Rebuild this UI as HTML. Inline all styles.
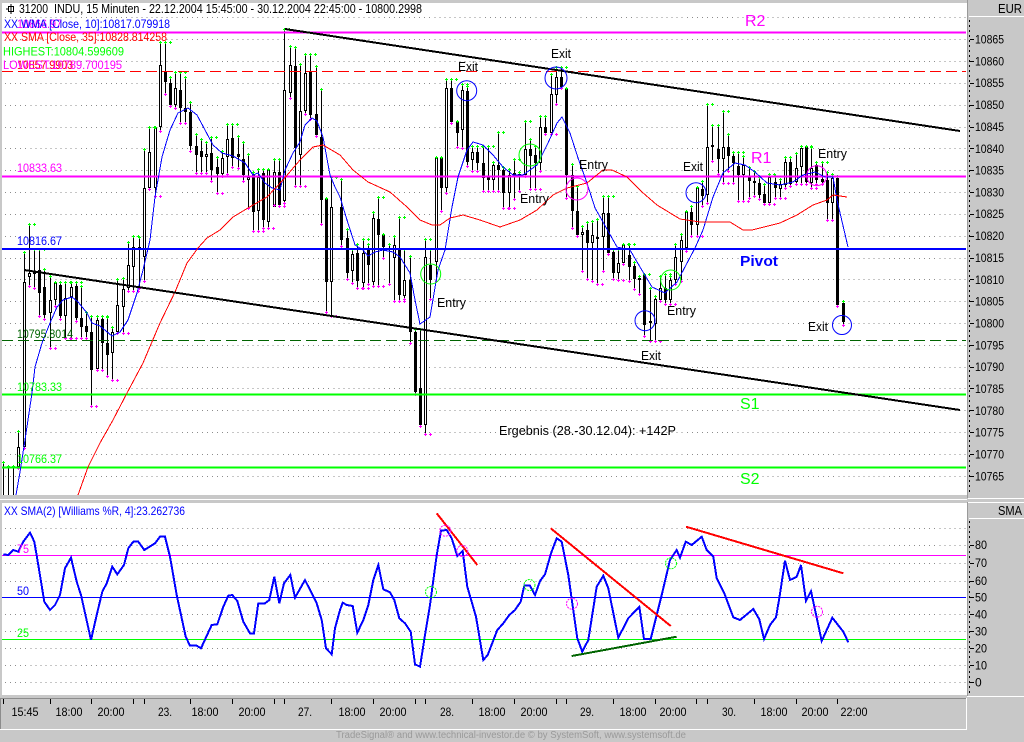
<!DOCTYPE html>
<html><head><meta charset="utf-8"><style>
html,body{margin:0;padding:0;background:#c8c8c8;width:1024px;height:742px;overflow:hidden}
svg{display:block}
text{font-family:"Liberation Sans",sans-serif;font-size:13px}
.a{font-size:12px}
</style></head><body>
<svg id="s" xmlns="http://www.w3.org/2000/svg" width="1024" height="742" viewBox="0 0 1024 742">
<rect width="1024" height="742" fill="#c8c8c8"/>
<rect x="2" y="3" width="965" height="492" fill="#fff"/>
<rect x="2" y="503" width="965" height="192" fill="#fff"/>
<rect x="0" y="499" width="967" height="1" fill="#fff"/>
<rect x="967" y="1" width="2" height="741" fill="#c8c8c8"/>
<rect x="967" y="0" width="1" height="498" fill="#9a9a9a"/>
<rect x="967" y="502" width="1" height="194" fill="#9a9a9a"/>
<rect x="969" y="16" width="55" height="1" fill="#fff"/>
<rect x="968" y="498" width="56" height="1" fill="#fff"/>
<rect x="968" y="502" width="56" height="1" fill="#fff"/>
<rect x="969" y="518" width="55" height="1" fill="#fff"/>
<rect x="967" y="696" width="57" height="1" fill="#fff"/>
<rect x="0" y="698" width="966" height="1" fill="#8c8c8c"/>
<rect x="0" y="729" width="967" height="1" fill="#fff"/>
<rect x="966" y="698" width="1" height="32" fill="#fff"/>
<rect x="0" y="698" width="1" height="31" fill="#8c8c8c"/>
<g id="grid"></g>
<g id="candles" shape-rendering="crispEdges"></g>
<g id="marks" shape-rendering="crispEdges"></g>
<g shape-rendering="crispEdges" fill="none">
<path d="M2 32.5H966M2 176.5H966" stroke="#f0f" stroke-width="2"/>
<path d="M2 249H966" stroke="#00f" stroke-width="2"/>
<path d="M2 394.5H966M2 467.5H966" stroke="#0f0" stroke-width="2"/>
<path d="M2 71.5H966" stroke="#f00" stroke-dasharray="11 5"/>
<path d="M2 340.5H966" stroke="#006400" stroke-dasharray="11 5"/>
<path id="wma" stroke="#00f"/>
<path id="sma" stroke="#f00"/>
<path d="M285 29L960 131M24 270L960 410" stroke="#000" stroke-width="2"/>
<path d="M2 555.5H966" stroke="#f0f"/>
<path d="M2 597.5H966" stroke="#00f"/>
<path d="M2 639.5H966" stroke="#0f0"/>
<path id="wil" stroke="#00f" stroke-width="2"/>
<path d="M436.7 513.3L477.3 565M550.7 528.3L670.7 626M686 526.7L843.3 573.3" stroke="#f00" stroke-width="2"/>
<path d="M571.7 656L676.7 636.7" stroke="#006400" stroke-width="2"/>
</g>
<g fill="none">
<circle cx="466.7" cy="90.7" r="10" stroke="#00f"/>
<circle cx="556" cy="78" r="11" stroke="#00f"/>
<circle cx="645" cy="320.7" r="10" stroke="#00f"/>
<circle cx="696" cy="192.7" r="10" stroke="#00f"/>
<circle cx="842" cy="325" r="9.5" stroke="#00f"/>
<circle cx="530" cy="155" r="11" stroke="#0f0"/>
<circle cx="430.7" cy="274" r="10" stroke="#0f0"/>
<circle cx="670.7" cy="280" r="10" stroke="#0f0"/>
<circle cx="577" cy="189" r="11" stroke="#f0f"/>
<circle cx="816.7" cy="175.7" r="10" stroke="#f0f"/>
<g stroke-dasharray="2 1">
<circle cx="431" cy="592" r="5.5" stroke="#0f0"/>
<circle cx="529.5" cy="585" r="5.5" stroke="#0f0"/>
<circle cx="671" cy="563.3" r="5.5" stroke="#0f0"/>
<circle cx="445.3" cy="530.7" r="5.5" stroke="#f0f"/>
<circle cx="462.3" cy="551" r="5.5" stroke="#f0f"/>
<circle cx="572" cy="603.7" r="5.5" stroke="#f0f"/>
<circle cx="817" cy="611.7" r="5.5" stroke="#f0f"/>
</g>
</g>
<g shape-rendering="crispEdges" fill="none" stroke="#000">
<rect x="8.5" y="6.5" width="5" height="5"/>
<path d="M11 4V14M6 9H8"/>
</g>
<g id="ticks" shape-rendering="crispEdges"></g>
<text x="19" y="13" textLength="29">31200</text>
<text x="54" y="13" textLength="368">INDU, 15 Minuten - 22.12.2004 15:45:00 - 30.12.2004 22:45:00 - 10800.2998</text>
<text class="a" x="17" y="28" fill="#f0f" textLength="45">10866.97</text>
<text class="a" x="4" y="28" fill="#00f" textLength="166">XX WMA [Close, 10]:10817.079918</text>
<text class="a" x="4" y="41" fill="#f00" textLength="163">XX SMA [Close, 35]:10828.814258</text>
<text class="a" x="3" y="55.5" fill="#0f0" textLength="121">HIGHEST:10804.599609</text>
<text class="a" x="17" y="69" fill="#f00" textLength="56">10857.9903</text>
<text class="a" x="3" y="69" fill="#f0f" textLength="119">LOWEST:10789.700195</text>
<text class="a" x="17" y="172" fill="#f0f" textLength="45">10833.63</text>
<text class="a" x="17" y="245" fill="#00f" textLength="45">10816.67</text>
<text class="a" x="17" y="338" fill="#006400" textLength="56">10795.8014</text>
<text class="a" x="17" y="391" fill="#0f0" textLength="45">10783.33</text>
<text class="a" x="17" y="463" fill="#0f0" textLength="45">10766.37</text>
<text x="458" y="71" textLength="20">Exit</text>
<text x="551" y="58" textLength="20">Exit</text>
<text x="579" y="169" textLength="29">Entry</text>
<text x="520" y="203" textLength="29">Entry</text>
<text x="683" y="171" textLength="20">Exit</text>
<text x="818" y="158" textLength="29">Entry</text>
<text x="437" y="307" textLength="29">Entry</text>
<text x="641" y="360" textLength="20">Exit</text>
<text x="667" y="315" textLength="29">Entry</text>
<text x="808" y="331" textLength="20">Exit</text>
<text x="499" y="435" textLength="177">Ergebnis (28.-30.12.04): +142P</text>
<text x="745" y="26" fill="#f0f" style="font-size:16px">R2</text>
<text x="751" y="163" fill="#f0f" style="font-size:16px">R1</text>
<text x="740" y="266" fill="#00f" style="font-size:15px;font-weight:bold" textLength="38">Pivot</text>
<text x="740" y="409" fill="#0f0" style="font-size:16px">S1</text>
<text x="740" y="484" fill="#0f0" style="font-size:16px">S2</text>
<text x="998" y="13" textLength="24">EUR</text>
<text x="998" y="515" textLength="24">SMA</text>
<text class="a" x="4" y="515" fill="#00f" textLength="181">XX SMA(2) [Williams %R, 4]:23.262736</text>
<text class="a" x="17" y="553" fill="#f0f" textLength="12">75</text>
<text class="a" x="17" y="595" fill="#00f" textLength="12">50</text>
<text class="a" x="17" y="637" fill="#0f0" textLength="12">25</text>
<g id="yl">
<text class="a" x="975" y="43.5" textLength="29">10865</text>
<text class="a" x="975" y="65.5" textLength="29">10860</text>
<text class="a" x="975" y="87" textLength="29">10855</text>
<text class="a" x="975" y="109" textLength="29">10850</text>
<text class="a" x="975" y="131" textLength="29">10845</text>
<text class="a" x="975" y="153" textLength="29">10840</text>
<text class="a" x="975" y="174.5" textLength="29">10835</text>
<text class="a" x="975" y="196.5" textLength="29">10830</text>
<text class="a" x="975" y="218" textLength="29">10825</text>
<text class="a" x="975" y="240" textLength="29">10820</text>
<text class="a" x="975" y="262" textLength="29">10815</text>
<text class="a" x="975" y="284" textLength="29">10810</text>
<text class="a" x="975" y="305.5" textLength="29">10805</text>
<text class="a" x="975" y="327.5" textLength="29">10800</text>
<text class="a" x="975" y="349.5" textLength="29">10795</text>
<text class="a" x="975" y="371" textLength="29">10790</text>
<text class="a" x="975" y="393" textLength="29">10785</text>
<text class="a" x="975" y="415" textLength="29">10780</text>
<text class="a" x="975" y="436.5" textLength="29">10775</text>
<text class="a" x="975" y="458.5" textLength="29">10770</text>
<text class="a" x="975" y="480.5" textLength="29">10765</text>
<text class="a" x="975" y="549" textLength="12">80</text>
<text class="a" x="975" y="567" textLength="12">70</text>
<text class="a" x="975" y="585" textLength="12">60</text>
<text class="a" x="975" y="601.5" textLength="12">50</text>
<text class="a" x="975" y="618.5" textLength="12">40</text>
<text class="a" x="975" y="635.5" textLength="12">30</text>
<text class="a" x="975" y="652.5" textLength="12">20</text>
<text class="a" x="975" y="669.5" textLength="12">10</text>
<text class="a" x="975" y="686.5">0</text>
</g>
<g id="xl">
<text class="a" x="11.5" y="716" textLength="27">15:45</text>
<text class="a" x="55.5" y="716" textLength="27">18:00</text>
<text class="a" x="97.5" y="716" textLength="27">20:00</text>
<text class="a" x="158" y="716" textLength="14">23.</text>
<text class="a" x="191.5" y="716" textLength="27">18:00</text>
<text class="a" x="238.5" y="716" textLength="27">20:00</text>
<text class="a" x="298" y="716" textLength="14">27.</text>
<text class="a" x="338.5" y="716" textLength="27">18:00</text>
<text class="a" x="379.5" y="716" textLength="27">20:00</text>
<text class="a" x="440" y="716" textLength="14">28.</text>
<text class="a" x="478.5" y="716" textLength="27">18:00</text>
<text class="a" x="520.5" y="716" textLength="27">20:00</text>
<text class="a" x="580" y="716" textLength="14">29.</text>
<text class="a" x="619.5" y="716" textLength="27">18:00</text>
<text class="a" x="659.5" y="716" textLength="27">20:00</text>
<text class="a" x="722" y="716" textLength="14">30.</text>
<text class="a" x="760.5" y="716" textLength="27">18:00</text>
<text class="a" x="801.5" y="716" textLength="27">20:00</text>
<text class="a" x="840.5" y="716" textLength="27">22:00</text>
</g>
<text x="336" y="738" fill="#9a9a9a" style="font-size:10px" textLength="350">TradeSignal® and www.technical-investor.de © by  SystemSoft, www.systemsoft.de</text>
</svg>
<script>
var NS="http://www.w3.org/2000/svg";
function E(p,n,a){var e=document.createElementNS(NS,n);for(var k in a)e.setAttribute(k,a[k]);p.appendChild(e);return e}
var $=function(i){return document.getElementById(i)};
var ts=document.querySelectorAll("text[textLength]");
for(var q=0;q<ts.length;q++)ts[q].setAttribute("lengthAdjust","spacingAndGlyphs");
// grid
var g=$("grid"),d="";
for(var i=-1;i<=20;i++){var y=Math.round(39.3+21.82*i)+.5;if(y>4&&y<495)d+="M5 "+y+"H966"}
[528,545,563,581,614,631,648,665,682].forEach(function(y){d+="M5 "+(y+.5)+"H966"});
E(g,"path",{d:d,stroke:"#8c8c8c","stroke-dasharray":"1 4.05",fill:"none","shape-rendering":"crispEdges"});
// candles x hi lo top bot fill (2 = no body)
var D=[[3,463,495,480,480,2],[8,467,495,480,480,2],[13,467,495,480,480,2],[18,432,467,447,467,0],[24,253,447,282,447,0],[29,225,285,273,277,0],[34,250,287,272,274,1],[39,250,315,270,293,1],[44,270,318,287,315,1],[50,277,347,300,313,0],[55,283,305,283,300,0],[60,283,318,285,316,1],[65,283,337,298,316,0],[71,283,337,287,297,0],[76,283,320,286,318,1],[81,287,337,318,327,1],[86,313,337,326,332,1],[91,317,405,332,370,1],[97,317,369,320,369,0],[102,317,369,319,343,1],[107,318,375,343,355,1],[112,328,379,332,353,0],[117,280,332,305,332,0],[123,279,332,289,307,0],[128,243,290,265,288,0],[133,237,290,247,267,0],[139,238,287,247,250,1],[144,150,280,188,257,0],[149,128,188,152,188,0],[155,128,195,128,188,0],[160,43,130,65,127,0],[165,43,93,71,82,1],[170,78,105,83,105,1],[175,73,107,88,105,0],[180,73,122,90,108,1],[185,78,122,108,112,1],[190,103,150,112,146,1],[196,135,172,146,155,1],[201,140,172,151,157,1],[206,143,172,154,157,0],[211,138,180,153,170,1],[217,158,192,167,174,1],[222,152,175,158,174,0],[227,125,173,139,157,0],[232,125,166,138,158,1],[238,137,167,154,157,1],[243,143,180,159,175,1],[248,155,207,177,180,0],[253,173,230,175,212,1],[258,170,230,177,211,0],[263,170,227,173,220,1],[268,170,227,170,222,0],[274,160,204,172,207,0],[279,160,205,172,205,1],[284,30,202,90,201,0],[290,47,97,65,93,0],[295,48,185,66,148,1],[300,65,185,111,155,0],[305,55,113,73,111,0],[310,55,118,72,115,1],[316,67,135,114,135,1],[321,90,223,137,200,1],[326,199,311,199,282,1],[331,178,315,207,282,0],[341.5,180,245,207,240,1],[347,230,278,238,273,1],[352,250,282,254,271,0],[357,245,287,253,281,1],[363,240,287,253,283,0],[368,245,283,250,265,1],[373,213,285,218,282,0],[378,198,285,219,235,1],[383,235,257,235,247,1],[389,245,283,280,283,2],[394,237,300,245,258,0],[399,218,300,250,295,1],[404,250,298,280,296,0],[410,257,342,280,332,1],[415,330,393,332,392,1],[420,330,425,388,425,1],[425.5,240,433,257,425,0],[430,250,298,265,280,1],[436,158,280,158,262,0],[441,158,210,158,188,1],[446,80,192,88,188,0],[451,80,122,88,122,1],[457,122,146,122,133,1],[462,85,147,90,130,0],[467,87,165,91,162,1],[472,147,170,152,160,0],[477,147,170,152,163,1],[483,147,190,163,178,1],[488,147,190,177,180,1],[493,163,190,165,180,0],[498,133,190,165,170,1],[503,168,207,170,193,1],[509,170,207,175,193,0],[514,160,198,173,175,1],[519,173,190,174,175,1],[525,122,175,149,175,0],[530,140,188,149,156,1],[535,147,188,155,163,1],[540,117,170,127,163,0],[545,117,133,127,133,1],[551,75,133,94,133,0],[556,68,103,77,95,0],[561,68,87,77,87,1],[566.5,89,197,89,175,1],[572,165,227,175,211,1],[577,187,235,211,235,1],[582,227,270,232,235,0],[587,223,278,230,243,1],[592,222,280,235,243,0],[597,220,283,237,239,1],[603,197,270,213,237,0],[608,197,253,213,253,1],[613,250,278,252,273,1],[618,250,279,263,273,0],[623,245,263,245,263,0],[629,245,280,255,267,1],[634,263,288,266,279,1],[639,277,293,278,280,0],[644,275,335,275,325,1],[650,289,340,321,323,0],[655,297,340,299,324,0],[660,277,300,288,300,0],[665,275,303,288,300,1],[670,277,303,280,300,0],[675,245,283,257,280,0],[681,235,280,240,262,0],[686,212,250,212,248,0],[691,207,235,212,225,1],[697,188,235,188,225,0],[702,182,205,189,196,1],[707,105,202,147,195,0],[712,126,160,145,147,1],[718,126,173,149,159,1],[723,112,182,147,159,0],[728,135,170,147,156,1],[733,153,182,156,163,1],[738,153,200,166,175,1],[743,157,200,165,175,0],[749,168,197,177,181,1],[754,172,195,181,183,1],[759,178,198,183,195,1],[764,185,203,194,203,1],[769,175,203,177,203,0],[775,177,197,182,188,1],[780,180,197,184,189,0],[785,158,187,162,185,0],[790,158,185,162,184,1],[796,154,183,168,182,0],[801,147,183,148,167,0],[806,147,183,147,182,1],[811,148,187,168,183,0],[816,163,183,165,180,1],[822,163,183,179,182,1],[827,173,219,180,203,1],[832,175,219,178,203,0],[837,177,305,178,305,1],[843,302,324,303,322,1]];
var c=$("candles"),w="",b="",wh="";
D.forEach(function(a){var x=Math.floor(a[0]);w+="M"+(x+.5)+" "+a[1]+"V"+a[2];
 var h=Math.max(a[4]-a[3],2);
 if(a[5]==1)b+="M"+(x-1)+" "+a[3]+"h3v"+h+"h-3z";
 else if(a[5]==0)wh+="M"+(x-.5)+" "+(a[3]+.5)+"h2v"+(h-1)+"h-2z";});
E(c,"path",{d:w,stroke:"#000",fill:"none"});
E(c,"path",{d:b,fill:"#000"});
E(c,"path",{d:wh,fill:"#fff",stroke:"#000"});
// markers
var m=$("marks"),mg="",mm="";
function plus(x,y){return "M"+(x-1)+" "+(y+.5)+"h3M"+(x+.5)+" "+(y-1)+"v3"}
D.forEach(function(a,i){var x=Math.floor(a[0]);if(a[1]<470)mg+=plus(x,a[1]-1);if(a[2]<490)mm+=plus(x,a[2]+1);
 var p=D[i-1],n=D[i+1];
 if(p&&n&&a[1]<=p[1]&&a[1]<=n[1])mg+=plus(x+5,a[1]-1);
 if(p&&n&&a[2]>=p[2]&&a[2]>=n[2]&&a[2]<490)mm+=plus(x+5,a[2]+1);});
E(m,"path",{d:mg,stroke:"#0f0"});E(m,"path",{d:mm,stroke:"#f0f"});
function L(a){return "M"+a.map(function(p){return p[0]+" "+p[1]}).join("L")}
$("wma").setAttribute("d",L([[16,495],[20,472],[25,440],[32,393],[35,367],[42,343],[50,323],[57,307],[63,300],[72,297],[78,302],[87,313],[92,323],[100,326],[112,336],[120,332],[128,320],[137,293],[143,270],[150,240],[155,197],[162,157],[170,130],[178,113],[188,108],[197,115],[205,130],[213,145],[222,153],[233,156],[245,163],[253,175],[258,173],[265,183],[272,188],[280,190],[285,170],[293,153],[300,142],[305,125],[312,118],[317,121],[323,137],[330,175],[335,187],[340,197],[347,220],[355,245],[363,250],[368,256],[375,252],[383,250],[393,252],[400,257],[410,273],[415,300],[420,324],[430,317],[438,270],[445,250],[452,207],[458,177],[467,150],[473,142],[483,145],[493,155],[503,167],[513,175],[523,175],[537,165],[548,143],[557,123],[562,117],[570,133],[578,158],[587,183],[595,208],[603,222],[617,247],[630,250],[640,267],[652,287],[665,293],[677,282],[695,248],[703,230],[713,197],[723,173],[735,163],[745,165],[755,172],[767,183],[780,185],[793,182],[803,175],[815,172],[825,177],[833,177],[837,200],[848,247]]));
$("sma").setAttribute("d",L([[78,495],[88,467],[100,443],[113,420],[127,393],[143,363],[160,323],[175,292],[187,263],[198,248],[207,238],[220,230],[233,217],[248,208],[267,197],[283,180],[300,160],[313,147],[323,145],[340,155],[353,170],[368,182],[390,192],[407,207],[420,220],[432,225],[440,225],[450,218],[463,215],[480,220],[500,227],[520,220],[537,210],[553,195],[567,188],[587,183],[603,170],[612,170],[627,177],[642,192],[657,205],[680,219],[700,222],[730,222],[743,230],[752,230],[780,223],[797,215],[813,205],[827,200],[833,195],[847,197]]));
var w7=[[10,178],[25,180],[40,165],[55,170],[70,140],[90,113],[103,140],[115,210],[133,320],[150,345],[165,330],[180,300],[195,220],[213,188],[230,260],[243,300],[273,435],[290,360],[307,290],[320,265],[337,215],[352,238],[372,210],[385,160],[400,140],[415,140],[433,165],[465,145],[480,125],[495,125],[510,185],[530,300],[557,425],[570,452],[590,452],[603,460],[635,390],[652,388],[670,335],[685,302],[697,300],[712,318],[730,380],[750,415],[762,415],[775,325],[795,325],[808,315],[823,245],[838,325],[852,265],[871,240],[885,308],[915,255],[950,325],[965,375],[978,460],[995,478],[1005,400],[1020,345]];
var w8=[[8,323],[20,330],[38,333],[52,413],[70,375],[85,330],[100,255],[115,210],[130,283],[150,292],[163,315],[178,370],[195,385],[212,410],[225,508],[240,515],[255,420],[270,330],[290,180],[303,107],[320,105],[335,130],[352,183],[368,168],[382,275],[408,365],[430,495],[443,480],[472,405],[490,385],[508,360],[525,345],[542,320],[553,272],[570,272],[585,300],[600,258],[615,238],[633,175],[650,130],[665,140],[685,240],[712,430],[727,470],[745,435],[770,275],[790,242],[805,280],[835,428],[865,370],[898,335],[912,432],[932,432],[965,300],[990,195],[1010,165]];
var w9=[[0,188],[17,140],[35,150],[65,125],[80,165],[100,185],[110,250],[133,295],[160,367],[180,375],[220,342],[238,373],[252,432],[270,390],[288,367],[298,310],[315,197],[330,255],[350,245],[363,210],[378,318],[393,288],[425,438],[457,368],[490,410],[505,442]];
function T(a,o){return a.map(function(p){return [(p[0]/3+o).toFixed(1),(495+p[1]/3).toFixed(1)]})}
$("wil").setAttribute("d",L(T(w7,0).concat(T(w8,340),T(w9,680))));
// ticks
var t=$("ticks"),k="",v="";
[10,152,274,400,433,571,697,823,853,994].forEach(function(x){k+="M"+Math.floor(x/3)+".5 699v5"});
[100,226,256,397,523,649,679,820,946].forEach(function(x){k+="M"+Math.floor(x/3+340)+".5 699v5"});
[49,82,223,349,472].forEach(function(x){k+="M"+Math.floor(x/3+680)+".5 699v5"});
for(var i=0;i<21;i++){k+="M970 "+(Math.round(39.3+21.82*i)+.5)+"h4"}
[545,563,581,597,614,631,648,665,682].forEach(function(y){k+="M970 "+(y+.5)+"h4"});
E(t,"path",{d:k,stroke:"#000"});
E(t,"path",{d:"M969.5 20V495M969.5 521V695",stroke:"#000","stroke-dasharray":"2 3"});
</script>
</body></html>
